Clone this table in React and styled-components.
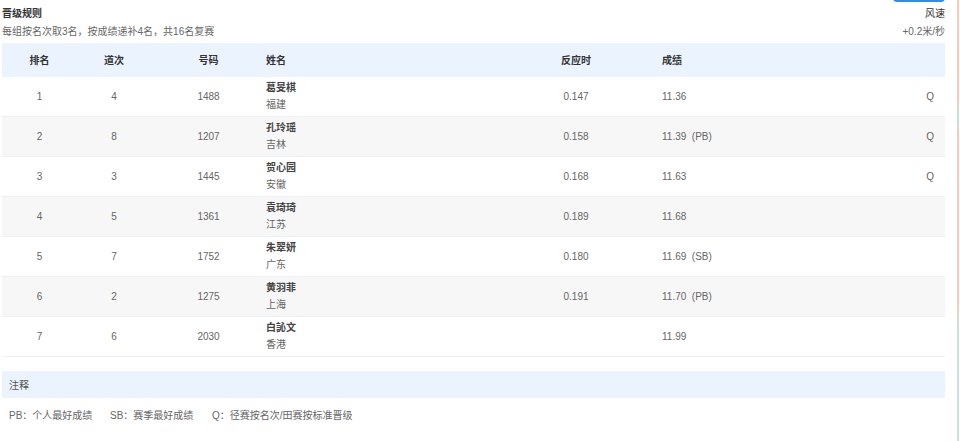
import React from 'react';
import styled, { createGlobalStyle } from 'styled-components';

const GlobalStyle = createGlobalStyle`
  html, body {
    margin: 0;
    padding: 0;
    background: #ffffff;
  }
  body {
    font-family: 'Liberation Sans', 'Noto Sans CJK SC', sans-serif;
    font-size: 10px;
    color: #666;
  }
`;

const Page = styled.div`
  width: 960px;
  height: 441px;
  overflow: hidden;
  display: flex;
  box-sizing: border-box;
`;

const Main = styled.div`
  width: 943px;
  margin-left: 2px;
  display: flex;
  flex-direction: column;
`;

const EdgeLine = styled.div`
  width: 2px;
  margin-left: 12px;
  background: linear-gradient(
    to bottom,
    #f8cbb9 0px,
    #f8cbb9 100px,
    #c3e2d8 112px,
    #c3e2d8 122px,
    #f8cbb9 132px,
    #f8cbb9 300px,
    #c8e4da 330px,
    #c8e4da 441px
  );
`;

const TopBar = styled.div`
  display: flex;
  justify-content: space-between;
  height: 43px;
`;

const RuleBlock = styled.div`
  padding-top: 5px;
  line-height: 18px;
`;

const Title = styled.div`
  font-weight: bold;
  color: #333;
`;

const SubText = styled.div`
  color: #666;
`;

const WindBlock = styled.div`
  display: flex;
  flex-direction: column;
  align-items: flex-end;
  line-height: 18px;
`;

const BlueButton = styled.div`
  width: 52px;
  height: 22px;
  margin-top: -20px;
  margin-bottom: 3px;
  border-radius: 4px;
  background: #2d8cf0;
`;

const WindTitle = styled.div`
  color: #333;
`;

const Row = styled.div`
  display: grid;
  grid-template-columns: 75px 74px 115px 254px 112px 200px 113px;
  height: ${(p) => (p.$head ? '34px' : '40px')};
  box-sizing: border-box;
  background: ${(p) => (p.$head ? '#ebf3fe' : p.$striped ? '#f7f7f7' : '#ffffff')};
  border-bottom: 1px solid ${(p) => (p.$head ? '#ebf3fe' : '#edf1f7')};
  color: ${(p) => (p.$head ? '#333' : '#666')};
  font-weight: ${(p) => (p.$head ? 'bold' : 'normal')};
`;

const Cell = styled.div`
  display: flex;
  align-items: center;
  justify-content: ${(p) => (p.$align === 'left' ? 'flex-start' : p.$align === 'right' ? 'flex-end' : 'center')};
  padding-left: ${(p) => p.$pl || 0}px;
  padding-right: ${(p) => p.$pr || 0}px;
  white-space: pre;
`;

const NameCell = styled.div`
  display: flex;
  flex-direction: column;
  padding-top: 2px;
  line-height: 17px;
`;

const Name = styled.span`
  color: #444;
  font-weight: bold;
`;

const Province = styled.span`
  color: #666;
`;

const NoteBar = styled.div`
  margin-top: 14px;
  height: 27px;
  background: #ebf3fe;
  display: flex;
  align-items: center;
  padding-left: 7px;
  color: #555;
`;

const Legend = styled.div`
  display: flex;
  padding: 11px 0 0 7px;
  line-height: 14px;
  color: #666;
`;

const LegendItem = styled.span`
  width: ${(p) => p.$w}px;
`;

const results = [
  { rank: 1, lane: 4, bib: '1488', name: '葛旻棋', prov: '福建', rt: '0.147', mark: '11.36', tag: '', q: 'Q' },
  { rank: 2, lane: 8, bib: '1207', name: '孔玲瑶', prov: '吉林', rt: '0.158', mark: '11.39', tag: '(PB)', q: 'Q' },
  { rank: 3, lane: 3, bib: '1445', name: '贺心园', prov: '安徽', rt: '0.168', mark: '11.63', tag: '', q: 'Q' },
  { rank: 4, lane: 5, bib: '1361', name: '袁琦琦', prov: '江苏', rt: '0.189', mark: '11.68', tag: '', q: '' },
  { rank: 5, lane: 7, bib: '1752', name: '朱翠妍', prov: '广东', rt: '0.180', mark: '11.69', tag: '(SB)', q: '' },
  { rank: 6, lane: 2, bib: '1275', name: '黄羽菲', prov: '上海', rt: '0.191', mark: '11.70', tag: '(PB)', q: '' },
  { rank: 7, lane: 6, bib: '2030', name: '白訫文', prov: '香港', rt: '', mark: '11.99', tag: '', q: '' },
];

const App = () => {
  return (
    <Page>
      <GlobalStyle />
      <Main>
        <TopBar>
          <RuleBlock>
            <Title>晋级规则</Title>
            <SubText>每组按名次取3名，按成绩递补4名，共16名复赛</SubText>
          </RuleBlock>
          <WindBlock>
            <BlueButton />
            <WindTitle>风速</WindTitle>
            <SubText>+0.2米/秒</SubText>
          </WindBlock>
        </TopBar>

        <Row $head>
          <Cell>排名</Cell>
          <Cell>道次</Cell>
          <Cell>号码</Cell>
          <Cell $align='left'>姓名</Cell>
          <Cell>反应时</Cell>
          <Cell $align='left' $pl={30}>成绩</Cell>
          <Cell />
        </Row>
        {results.map((el, index) => (
          <Row key={el.bib} $striped={index % 2 === 1}>
            <Cell>{el.rank}</Cell>
            <Cell>{el.lane}</Cell>
            <Cell>{el.bib}</Cell>
            <NameCell>
              <Name>{el.name}</Name>
              <Province>{el.prov}</Province>
            </NameCell>
            <Cell>{el.rt}</Cell>
            <Cell $align='left' $pl={30}>
              {el.tag ? `${el.mark}  ${el.tag}` : el.mark}
            </Cell>
            <Cell $align='right' $pr={11}>{el.q}</Cell>
          </Row>
        ))}

        <NoteBar>注释</NoteBar>
        <Legend>
          <LegendItem $w={101}>PB：个人最好成绩</LegendItem>
          <LegendItem $w={102}>SB：赛季最好成绩</LegendItem>
          <LegendItem>Q：径赛按名次/田赛按标准晋级</LegendItem>
        </Legend>
      </Main>
      <EdgeLine />
    </Page>
  );
};

export default App;
